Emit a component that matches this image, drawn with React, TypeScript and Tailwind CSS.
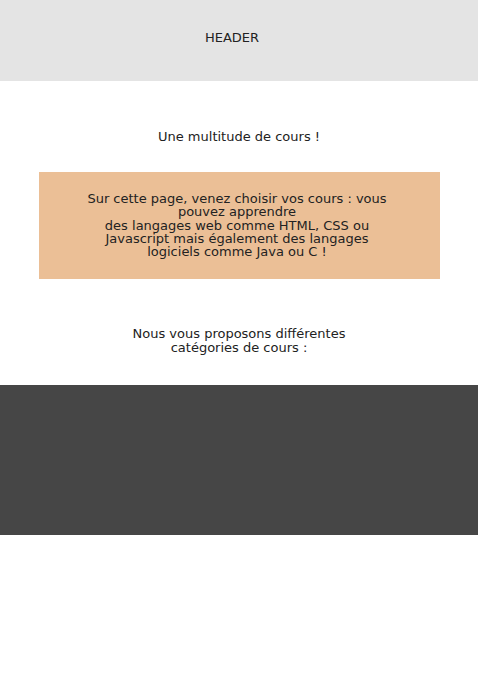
export default function App() {
  return (
    <div className="min-h-[676px] bg-white text-[#222] font-['DejaVu_Sans',sans-serif] text-[13px]">
      <header className="h-[81px] bg-[#e4e4e4] flex items-center justify-center pb-[7px] pr-[14px]">
        <span className="leading-none">HEADER</span>
      </header>

      <main className="flex flex-col items-center">
        <h1 className="mt-[49px] leading-[14px] text-center">Une multitude de cours !</h1>

        <div className="mt-[28px] w-[401px] bg-[#ebbf96] pt-[20px] pb-[21px] pr-[4px] text-center leading-[13.25px]">
          Sur cette page, venez choisir vos cours : vous
          <br />
          pouvez apprendre
          <br />
          des langages web comme HTML, CSS ou
          <br />
          Javascript mais également des langages
          <br />
          logiciels comme Java ou C !
        </div>

        <p className="mt-[48px] text-center leading-[14px]">
          Nous vous proposons différentes
          <br />
          catégories de cours :
        </p>
      </main>

      <section className="mt-[30px] h-[150px] bg-[#464646]" />
    </div>
  );
}
